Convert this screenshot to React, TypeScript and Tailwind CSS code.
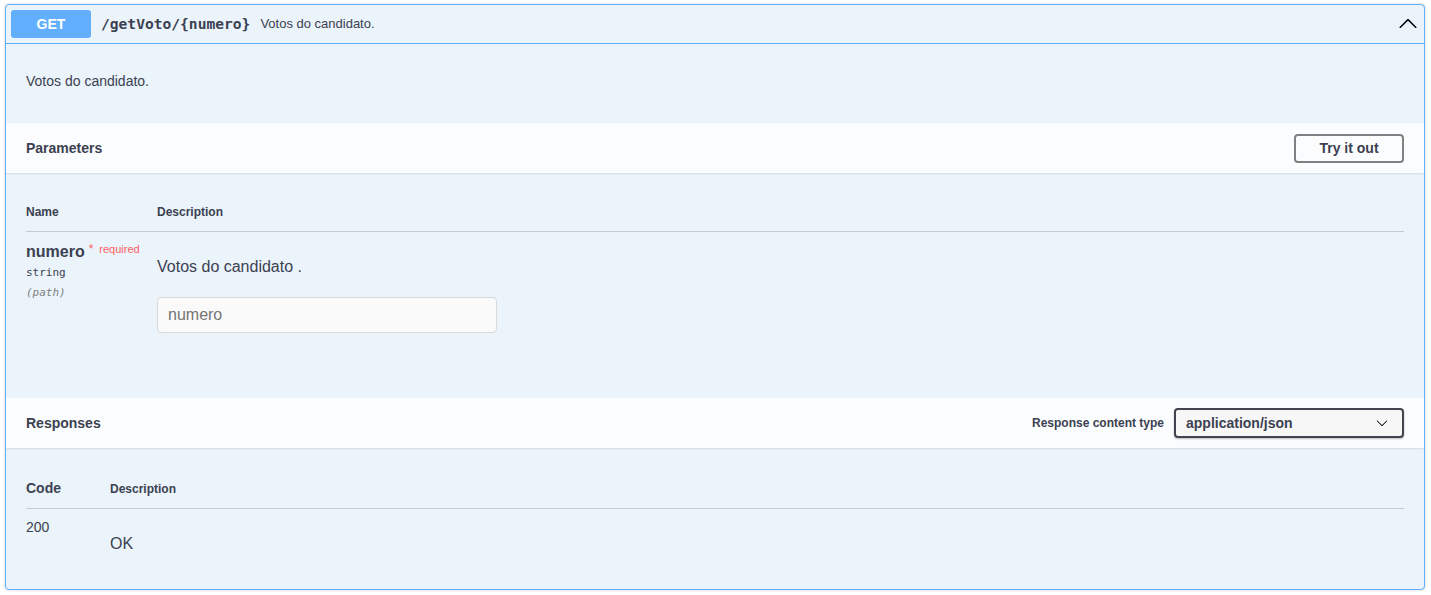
const arrow =
  'M17.418 6.109c.272-.268.709-.268.979 0s.271.701 0 .969l-7.908 7.83c-.27.268-.707.268-.979 0l-7.908-7.830c-.27-.268-.27-.701 0-.969.271-.268.709-.268.979 0L10 13.25l7.418-7.141z';

function Chevron({ className }: { className?: string }) {
  return (
    <svg viewBox="0 0 20 20" className={className} fill="currentColor" aria-hidden>
      <path d={arrow} />
    </svg>
  );
}

const mono = "font-['DejaVu_Sans_Mono',monospace]";

export default function App() {
  return (
    <div className="min-h-[595px] bg-white pt-[4px] px-[5px] font-['Liberation_Sans',Arial,sans-serif] text-[#3b4151]">
      <div className="w-[1420px] h-[586px] rounded-[4px] border border-[#61affe] bg-[#ebf3fb] shadow-[0_0_3px_rgba(0,0,0,0.19)] overflow-hidden">
        {/* Summary */}
        <div className="flex items-center h-[39px] px-[5px] border-b border-[#61affe]">
          <span className="w-[80px] h-[28px] rounded-[3px] bg-[#61affe] text-white text-[14px] font-bold flex items-center justify-center">
            GET
          </span>
          <span className={`${mono} ml-[10px] text-[14.6px] font-bold text-[#3b4151]`}>/getVoto/&#123;numero&#125;</span>
          <span className="ml-[10px] text-[13px]">Votos do candidato.</span>
          <Chevron className="ml-auto mr-[1px] w-[20px] h-[20px] rotate-180 text-black" />
        </div>

        {/* Description */}
        <div className="h-[79px] px-[20px] pt-[29px]">
          <p className="text-[14px] leading-[17px]">Votos do candidato.</p>
        </div>

        {/* Parameters header */}
        <div className="h-[50px] px-[20px] flex items-center justify-between bg-[#fbfcfe] shadow-[0_1px_2px_rgba(0,0,0,0.1)]">
          <h4 className="text-[14px] font-bold">Parameters</h4>
          <button className="w-[110px] h-[29px] rounded-[4px] border-2 border-[#808080] text-[14px] font-bold bg-transparent">
            Try it out
          </button>
        </div>

        {/* Parameters table */}
        <div className="h-[225px] px-[20px] pt-[20px]">
          <div className="flex text-[12px] font-bold h-[39px] items-center border-b border-[#c5cad3]">
            <div className="w-[131px]">Name</div>
            <div>Description</div>
          </div>
          <div className="flex pt-[10px]">
            <div className="w-[131px]">
              <div className="flex items-start">
                <span className="text-[16px] font-bold leading-[20px]">numero</span>
                <span className="ml-[4px] text-[#ff6060] text-[11px] leading-[14px]">
                  <span className="text-[12px] mr-[6px]">*</span>required
                </span>
              </div>
              <div className={`${mono} text-[11px] mt-[1px] leading-[20px]`}>string</div>
              <div className={`${mono} text-[11px] italic text-[#808080] leading-[20px]`}>(path)</div>
            </div>
            <div className="pt-[15px]">
              <p className="text-[16px] leading-[20px]">Votos do candidato .</p>
              <input
                placeholder="numero"
                className="mt-[20px] w-[340px] h-[36px] rounded-[4px] border border-[#d9d9d9] bg-[#fafafa] px-[10px] text-[16px] placeholder:text-[#757575] outline-none"
              />
            </div>
          </div>
        </div>

        {/* Responses header */}
        <div className="h-[50px] px-[20px] flex items-center justify-between bg-[#fbfcfe] shadow-[0_1px_2px_rgba(0,0,0,0.1)]">
          <h4 className="text-[14px] font-bold">Responses</h4>
          <div className="flex items-center">
            <span className="text-[12px] font-bold mr-[10px]">Response content type</span>
            <div className="w-[230px] h-[30px] rounded-[4px] border-2 border-[#41444e] bg-[#f7f7f7] flex items-center justify-between pl-[10px] pr-[14px] shadow-[0_1px_2px_rgba(0,0,0,0.25)]">
              <span className="text-[14px] font-bold">application/json</span>
              <Chevron className="w-[12px] h-[12px] text-black" />
            </div>
          </div>
        </div>

        {/* Responses table */}
        <div className="px-[20px] pt-[21px]">
          <div className="flex items-center h-[40px] border-b border-[#c5cad3] font-bold">
            <div className="w-[84px] text-[14px]">Code</div>
            <div className="text-[12px]">Description</div>
          </div>
          <div className="flex pt-[10px]">
            <div className="w-[84px] text-[14px] leading-[17px]">200</div>
            <div className="pt-[16px] text-[16px] leading-[18px]">OK</div>
          </div>
        </div>
      </div>
    </div>
  );
}
